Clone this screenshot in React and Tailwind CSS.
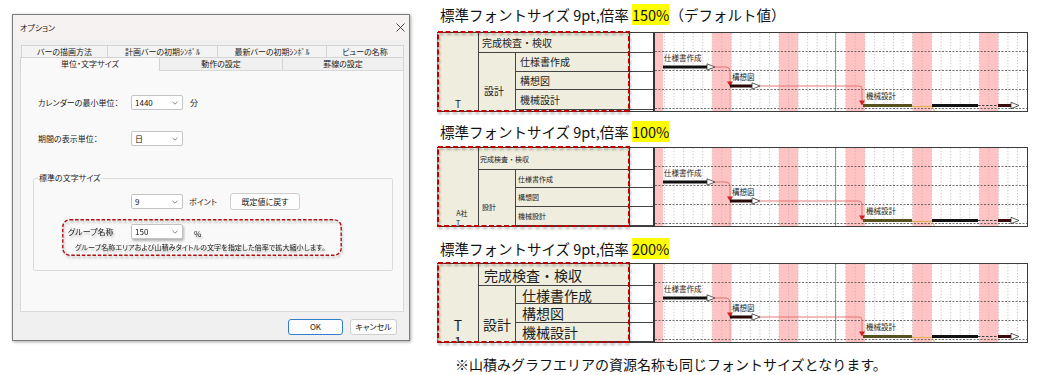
import React from "react";

const jp = "font-['Noto_Sans_CJK_JP','Noto_Sans',sans-serif]";
const palt = "[font-feature-settings:'palt']";

function Select({ value }) {
  return (
    <div className="w-[52px] h-[15px] shrink-0 bg-white border border-[#c4c4c4] rounded-[2px] flex items-center justify-between pl-[3px] pr-[4px]">
      <span className="text-[8px] leading-none text-[#111]">{value}</span>
      <svg width="6" height="4" viewBox="0 0 6 4">
        <path d="M0.5 0.8L3 3.2L5.5 0.8" fill="none" stroke="#666" strokeWidth="0.8" />
      </svg>
    </div>
  );
}

function Dialog() {
  return (
    <div className={`ml-[12px] mt-[14px] w-[398px] h-[327px] shrink-0 flex flex-col bg-[#f0f0f0] border border-[#7a7a7a] shadow-[1px_1px_3px_rgba(0,0,0,0.35)] ${jp} ${palt} text-[8px] leading-[10px] text-[#1a1a1a]`}>
      <div className="h-[25px] shrink-0 bg-[#f7f2f2] flex items-center justify-between pl-[7px] pr-[4px]">
        <span>オプション</span>
        <svg width="9" height="9" viewBox="0 0 9 9">
          <path d="M0.5 0.5L8.5 8.5M8.5 0.5L0.5 8.5" stroke="#333" strokeWidth="0.9" />
        </svg>
      </div>
      <div className="shrink-0 flex flex-col pl-[7px] pr-[5px] pt-[5px]">
        <div className="h-[12px] ml-[1px] flex">
          <div className="w-[87px] h-full border-t border-l border-r border-[#d4d4d4] bg-[#f3f3f3] flex items-center justify-center">バーの描画方法</div>
          <div className="w-[110px] h-full border-t border-r border-[#d4d4d4] bg-[#f3f3f3] flex items-center justify-center">計画バーの初期ｼﾝﾎﾞﾙ</div>
          <div className="w-[109px] h-full border-t border-r border-[#d4d4d4] bg-[#f3f3f3] flex items-center justify-center">最新バーの初期ｼﾝﾎﾞﾙ</div>
          <div className="flex-1 h-full border-t border-r border-[#d4d4d4] bg-[#f3f3f3] flex items-center justify-center">ビューの名称</div>
        </div>
        <div className="h-[13px] flex items-start relative z-10">
          <div className="w-[140px] h-[14px] border-t border-l border-r border-[#d4d4d4] bg-[#f9f9f9] flex items-start justify-center pt-[1px]">単位・文字サイズ</div>
          <div className="w-[123px] h-full border-t border-r border-[#d4d4d4] bg-[#f0f0f0] flex items-center justify-center">動作の設定</div>
          <div className="flex-1 h-full border-t border-r border-[#d4d4d4] bg-[#f0f0f0] flex items-center justify-center">罫線の設定</div>
        </div>
        <div className="h-[242px] bg-[#f9f9f9] border border-[#d9d9d9] flex flex-col pl-[17px] pt-[24px]">
          <div className="flex items-center">
            <span className="w-[93px] shrink-0">カレンダーの最小単位：</span>
            <Select value="1440" />
            <span className="ml-[7px]">分</span>
          </div>
          <div className="flex items-center mt-[21px]">
            <span className="w-[93px] shrink-0">期間の表示単位：</span>
            <Select value="日" />
          </div>
          <fieldset className="-ml-[5px] mt-[27px] w-[360px] h-[98px] border border-[#dcdcdc] rounded-[2px]">
            <legend className="ml-[4px] px-[1px] leading-[10px]">標準の文字サイズ</legend>
            <div className="flex items-center mt-[10px] pl-[97px]">
              <Select value="9" />
              <span className="ml-[6px] w-[41px] shrink-0">ポイント</span>
              <div className="w-[70px] h-[17px] bg-[#fdfdfd] border border-[#cfcfcf] rounded-[3px] flex items-center justify-center">既定値に戻す</div>
            </div>
            <div className="relative ml-[28px] mt-[9px] w-[280px] h-[37px] drop-shadow-[1px_2px_1px_rgba(0,0,0,0.28)]">
              <svg className="absolute left-0 top-0" width="280" height="37" viewBox="0 0 280 37">
                <rect x="0.8" y="0.8" width="278.4" height="35.4" rx="7" fill="none" stroke="#b01010" strokeWidth="1.4" strokeDasharray="3.5 1.8" />
              </svg>
              <div className="relative flex items-start pt-[5px] pl-[6px]">
                <span className="w-[63px] h-[15px] shrink-0 flex items-center">グループ名称</span>
                <Select value="150" />
                <span className="ml-[11px] mt-[5px]">%</span>
              </div>
              <div className="relative pl-[13px] mt-[3px] whitespace-nowrap text-[7.1px]">グループ名称エリアおよび山積みタイトルの文字を指定した倍率で拡大縮小します。</div>
            </div>
          </fieldset>
        </div>
      </div>
      <div className="flex-1 flex items-start justify-end pt-[7px] pr-[12px] gap-[7px]">
        <div className="w-[55px] h-[16px] bg-[#fdfdfd] border border-[#2f7fd0] rounded-[3px] flex items-center justify-center">OK</div>
        <div className="w-[47px] h-[16px] bg-[#fdfdfd] border border-[#cfcfcf] rounded-[3px] flex items-center justify-center">キャンセル</div>
      </div>
    </div>
  );
}

const DW = 372 / 39;
const PINK = [[0, 0.85], [6, 8], [13, 15], [20, 22], [27, 29], [34, 36]];
const DAYS = Array.from({ length: 38 }, (_, i) => i + 1);

function Arrow({ x, y }) {
  return <polygon points={`${x},${y - 3.2} ${x + 8},${y} ${x},${y + 3.2}`} fill="#fff" stroke="#333" strokeWidth="0.8" />;
}

function Gantt() {
  return (
    <svg width="372" height="78" viewBox="0 0 372 78" className="block shrink-0 font-['Noto_Sans_CJK_JP',sans-serif]">
      <rect width="372" height="78" fill="#fff" />
      {PINK.map(([a, b]) => (
        <rect key={a} x={a * DW} y="0" width={(b - a) * DW} height="78" fill="#ffc3c3" />
      ))}
      {DAYS.map((d) => (
        <line key={d} x1={d * DW} x2={d * DW} y1="0" y2="78" stroke="#b4b4b4" strokeWidth="0.7" strokeDasharray="1.3 1.7" />
      ))}
      <line x1="180.5" x2="180.5" y1="0" y2="78" stroke="#8a8a8a" strokeWidth="0.9" />
      {[18.5, 37.5, 56.5, 75.5].map((y) => (
        <line key={y} x1="0" x2="372" y1={y} y2={y} stroke="#4a4a4a" strokeWidth="0.8" strokeDasharray="2 1.5" />
      ))}
      {/* 仕様書作成 */}
      <text x="9" y="28" fontSize="7.5" fill="#222">仕様書作成</text>
      <rect x="8" y="32.5" width="45" height="3" fill="#111" />
      <Arrow x={52} y={34} />
      <path d="M60 34 H71 Q75 34 75 38 V50" fill="none" stroke="#e06a6a" strokeWidth="0.9" />
      <line x1="75" x2="75" y1="53" y2="78" stroke="#e8a0a0" strokeWidth="0.8" />
      <polygon points="72,48.5 78,48.5 75,53.5" fill="#d02020" />
      {/* 構想図 */}
      <text x="77" y="47" fontSize="7.5" fill="#222">構想図</text>
      <rect x="75" y="51.5" width="23" height="3" fill="#2a0808" />
      <Arrow x={97} y={53} />
      <path d="M105 53 H204 Q207 53 207 56 V69" fill="none" stroke="#e06a6a" strokeWidth="0.9" />
      <polygon points="204,67.5 210,67.5 207,72.5" fill="#d02020" />
      {/* 機械設計 */}
      <text x="211" y="66" fontSize="7.5" fill="#222">機械設計</text>
      <rect x="208" y="71" width="49" height="3" fill="#57511f" />
      <line x1="257" x2="277" y1="73.5" y2="73.5" stroke="#e2b04a" strokeWidth="1" />
      <line x1="277" x2="279.5" y1="73.5" y2="78" stroke="#e2b04a" strokeWidth="1" />
      <rect x="277" y="71" width="46" height="3" fill="#111" />
      <line x1="323" x2="343" y1="72.5" y2="72.5" stroke="#333" strokeWidth="0.9" strokeDasharray="2.5 1.5" />
      <rect x="343" y="71" width="14" height="3" fill="#3a0c0c" />
      <Arrow x={356} y={72.5} />
    </svg>
  );
}

function Chart({ rowH, fs, col1, col1Pt, sPt, sPl, c2Pl, c3Pl }) {
  return (
    <div className="relative w-[591px] h-[80px] flex bg-white border-t border-r border-b border-[#3c3c3c]">
      <div className={`w-[192px] h-full shrink-0 flex overflow-hidden bg-[#efeddd] border-l border-[#9a9a9a] text-[#1c1c1c] whitespace-nowrap ${fs}`}>
        <div className={`w-[41px] h-full shrink-0 border-r border-[#444] flex flex-col items-center ${col1Pt}`}>{col1}</div>
        <div className="flex-1 flex flex-col">
          <div className={`${rowH[0]} shrink-0 border-b border-[#444] flex items-center ${c2Pl}`}>完成検査・検収</div>
          <div className="flex-1 flex">
            <div className={`w-[37px] shrink-0 border-r border-[#444] ${sPt} ${sPl}`}>設計</div>
            <div className="flex-1 flex flex-col">
              <div className={`${rowH[1]} shrink-0 border-b border-[#444] flex items-center ${c3Pl}`}>仕様書作成</div>
              <div className={`${rowH[2]} shrink-0 border-b border-[#444] flex items-center ${c3Pl}`}>構想図</div>
              <div className={`${rowH[3]} shrink-0 border-b border-[#444] flex items-center ${c3Pl}`}>機械設計</div>
            </div>
          </div>
        </div>
      </div>
      <div className="w-[24px] h-full shrink-0 flex flex-col border-l border-[#444]">
        <div className={`${rowH[0]} shrink-0 border-b border-[#444]`} />
        <div className={`${rowH[1]} shrink-0 border-b border-[#444]`} />
        <div className={`${rowH[2]} shrink-0 border-b border-[#444]`} />
        <div className={`${rowH[3]} shrink-0 border-b border-[#444]`} />
      </div>
      <div className="w-[2px] h-full shrink-0 bg-[#333]" />
      <Gantt />
      <svg className="absolute left-0 -top-[2px] drop-shadow-[1px_2px_1px_rgba(0,0,0,0.3)]" width="193" height="81" viewBox="0 0 193 81">
        <rect x="1" y="1" width="191" height="79" fill="none" stroke="#c00000" strokeWidth="2" strokeDasharray="5 2.5" />
      </svg>
    </div>
  );
}

const title = "h-[22px] text-[14.5px] leading-[22px] pl-[3px] whitespace-nowrap [text-spacing-trim:space-all]";

export default function App() {
  return (
    <div className="w-[1042px] h-[375px] bg-white overflow-hidden flex">
      <Dialog />
      <div className={`ml-[27px] w-[591px] shrink-0 flex flex-col ${jp} text-[#111]`}>
        <div className={`mt-[4px] ${title}`}>
          標準フォントサイズ 9pt,倍率 <span className="bg-[#ffff00]">150%</span>（デフォルト値）
        </div>
        <div className="mt-[6px]">
          <Chart
            rowH={["h-[20px]", "h-[19px]", "h-[18px]", "h-[20px]"]}
            fs="text-[10px] leading-[12px]"
            col1={<span>T</span>}
            col1Pt="pt-[65px]"
            sPt="pt-[32px]"
            sPl="pl-[5px]"
            c2Pl="pl-[3px]"
            c3Pl="pl-[4px]"
          />
        </div>
        <div className={`mt-[9px] ${title}`}>
          標準フォントサイズ 9pt,倍率 <span className="bg-[#ffff00]">100%</span>
        </div>
        <div className="mt-[4px]">
          <Chart
            rowH={["h-[22px]", "h-[18px]", "h-[19px]", "h-[19px]"]}
            fs="text-[7px] leading-[10px]"
            col1={<><span className="ml-[8px]">A社</span><span>T</span></>}
            col1Pt="pt-[60px]"
            sPt="pt-[32px]"
            sPl="pl-[3px]"
            c2Pl="pl-[1px]"
            c3Pl="pl-[2px]"
          />
        </div>
        <div className={`mt-[11px] ${title}`}>
          標準フォントサイズ 9pt,倍率 <span className="bg-[#ffff00]">200%</span>
        </div>
        <div className="mt-[3px]">
          <Chart
            rowH={["h-[22px]", "h-[18px]", "h-[19px]", "h-[19px]"]}
            fs="text-[14px] leading-[16px]"
            col1={<><span>T</span><span>1</span></>}
            col1Pt="pt-[53px]"
            sPt="pt-[30px]"
            sPl="pl-[4px]"
            c2Pl="pl-[5px]"
            c3Pl="pl-[6px]"
          />
        </div>
        <div className="mt-[10px] h-[22px] text-[14px] leading-[22px] pl-[18px] whitespace-nowrap">
          ※山積みグラフエリアの資源名称も同じフォントサイズとなります。
        </div>
      </div>
    </div>
  );
}
